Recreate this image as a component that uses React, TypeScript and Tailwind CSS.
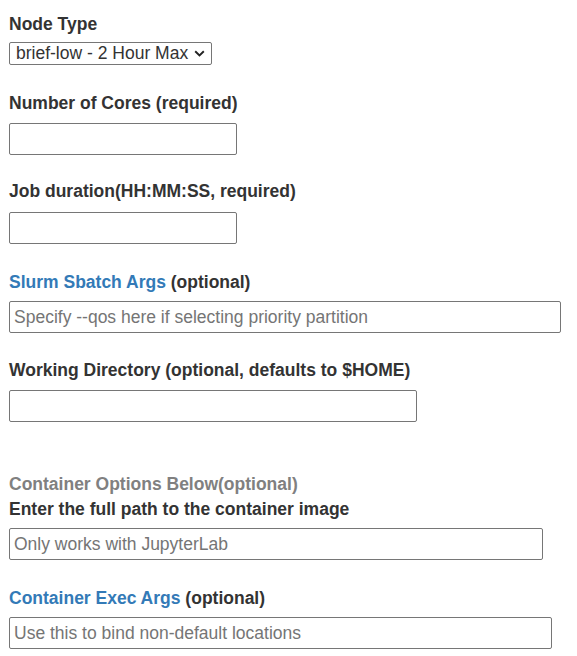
import React from 'react';

const Label: React.FC<{ className?: string; children: React.ReactNode }> = ({ className = '', children }) => (
  <label className={`block font-bold text-[17.5px] leading-[20px] text-[#333333] ${className}`}>{children}</label>
);

const TextInput: React.FC<{ width: string; placeholder?: string; className?: string }> = ({ width, placeholder, className = '' }) => (
  <input
    type="text"
    placeholder={placeholder}
    className={`block h-[32px] ${width} border border-[#767676] rounded-[2px] px-[4px] text-[17.5px] text-[#333333] placeholder:text-[#757575] bg-white ${className}`}
  />
);

export default function App() {
  return (
    <div className="min-h-screen bg-white pl-[9px] pt-[14px] font-['Liberation_Sans',Arial,sans-serif]">
      {/* Node type */}
      <Label>Node Type</Label>
      <div className="relative mt-[8px] w-[203px]">
        <select className="block w-full h-[23px] appearance-none border border-[#767676] rounded-[2px] pl-[6px] text-[17.5px] leading-[21px] text-[#333333] bg-white">
          <option>brief-low - 2 Hour Max</option>
        </select>
        <svg className="absolute right-[7px] top-[8px] pointer-events-none" width="11" height="7" viewBox="0 0 11 7">
          <path d="M1.2 1.2 L5.5 5.4 L9.8 1.2" fill="none" stroke="#222" strokeWidth="1.9" />
        </svg>
      </div>

      {/* Cores */}
      <Label className="mt-[28px]">Number of Cores (required)</Label>
      <TextInput width="w-[228px]" className="mt-[10px]" />

      {/* Duration */}
      <Label className="mt-[26px]">Job duration(HH:MM:SS, required)</Label>
      <TextInput width="w-[228px]" className="mt-[11px]" />

      {/* Sbatch args */}
      <Label className="mt-[28px]">
        <span className="text-[#337ab7]">Slurm Sbatch Args</span> (optional)
      </Label>
      <TextInput width="w-[552px]" className="mt-[9px]" placeholder="Specify --qos here if selecting priority partition" />

      {/* Working dir */}
      <Label className="mt-[27px]">Working Directory (optional, defaults to $HOME)</Label>
      <TextInput width="w-[408px]" className="mt-[10px]" />

      {/* Container */}
      <div className="mt-[52px] font-bold text-[17.5px] leading-[20px] text-[#808080]">Container Options Below(optional)</div>
      <Label className="mt-[5px]">Enter the full path to the container image</Label>
      <TextInput width="w-[534px]" className="mt-[9px]" placeholder="Only works with JupyterLab" />

      <Label className="mt-[28px]">
        <span className="text-[#337ab7]">Container Exec Args</span> (optional)
      </Label>
      <TextInput width="w-[543px]" className="mt-[9px]" placeholder="Use this to bind non-default locations" />
    </div>
  );
}
